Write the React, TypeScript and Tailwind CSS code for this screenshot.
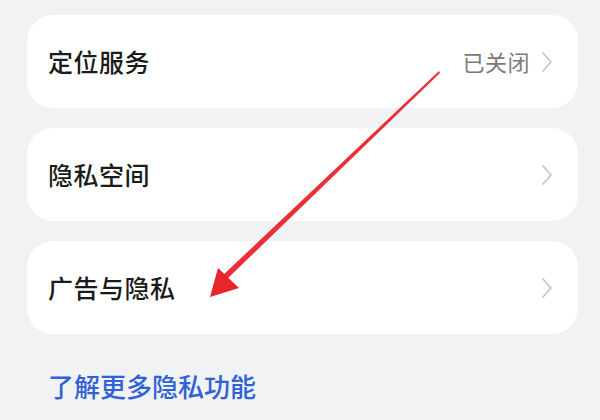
import React from "react";

const font = { fontFamily: '"Noto Sans CJK SC", "Noto Sans", sans-serif' };

function Chevron() {
  return (
    <svg width="14" height="24" viewBox="0 0 14 24" fill="none" className="flex-none">
      <path d="M3 3 L11 12 L3 21" stroke="#c4c6ca" strokeWidth="1.8" strokeLinecap="round" strokeLinejoin="round" />
    </svg>
  );
}

function Row({ title, value }: { title: string; value?: string }) {
  return (
    <div className="h-[93px] bg-white rounded-[26px] flex items-center justify-between pl-[21px] pr-[24px]">
      <span className="text-[25px] text-[#1b1b1b] font-medium tracking-[0.5px]">{title}</span>
      <div className="flex items-center gap-[10px]">
        {value && <span className="text-[22px] text-[#7a7a7a] tracking-[0.5px]">{value}</span>}
        <Chevron />
      </div>
    </div>
  );
}

export default function App() {
  return (
    <div className="relative w-[600px] h-[420px] bg-[#f1f2f4] overflow-hidden" style={font}>
      <div className="flex flex-col gap-[20px] pl-[27px] pr-[22px] pt-[15px]">
        <Row title="定位服务" value="已关闭" />
        <Row title="隐私空间" />
        <Row title="广告与隐私" />
        <div className="pl-[21px] pt-[12px]">
          <span className="text-[26px] text-[#2f62d4] font-medium">了解更多隐私功能</span>
        </div>
      </div>

      {/* red annotation arrow */}
      <svg className="absolute left-0 top-0" width="600" height="420" viewBox="0 0 600 420">
        <polygon points="439,71 440,73 226,280 222,276" fill="#e8252b" opacity="0.95" />
        <polygon points="210,297 218,268 239,288" fill="#e8252b" />
      </svg>
    </div>
  );
}
